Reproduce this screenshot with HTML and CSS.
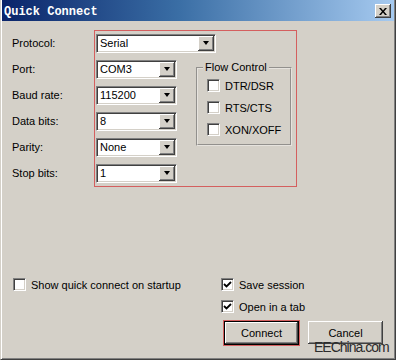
FILE: index.html
```html
<!DOCTYPE html>
<html lang="en">
<head>
  <meta charset="UTF-8" />
  <title>Quick Connect</title>
  <link rel="stylesheet" href="styles.css">
</head>
<body>
  <div class="window">
    <!-- Title bar -->
    <div class="titlebar">
      <span class="title">Quick Connect</span>
      <span class="close">
        <svg width="8" height="7" viewBox="0 0 8 7"><path d="M0 0h2l2 2.5 2-2.5h2l-3 3.5 3 3.5h-2l-2-2.5-2 2.5h-2l3-3.5z" fill="#000"/></svg>
      </span>
    </div>

    <div class="content">
      <div class="form">
        <div class="labels">
          <span>Protocol:</span>
          <span>Port:</span>
          <span>Baud rate:</span>
          <span>Data bits:</span>
          <span>Parity:</span>
          <span>Stop bits:</span>
        </div>

        <div class="highlight">
          <div class="combo wide"><span class="value">Serial</span><span class="arrow"></span></div>
          <div class="settings">
            <div class="combos">
              <div class="combo"><span class="value">COM3</span><span class="arrow"></span></div>
              <div class="combo"><span class="value">115200</span><span class="arrow"></span></div>
              <div class="combo"><span class="value">8</span><span class="arrow"></span></div>
              <div class="combo"><span class="value">None</span><span class="arrow"></span></div>
              <div class="combo"><span class="value">1</span><span class="arrow"></span></div>
            </div>
            <fieldset class="flow">
              <legend>Flow Control</legend>
              <div class="check"><span class="box"></span>DTR/DSR</div>
              <div class="check"><span class="box"></span>RTS/CTS</div>
              <div class="check"><span class="box"></span>XON/XOFF</div>
            </fieldset>
          </div>
        </div>
      </div>

      <div class="options">
        <div class="check startup"><span class="box"></span>Show quick connect on startup</div>
        <div class="right">
          <div class="check"><span class="box"><svg width="9" height="9" viewBox="0 0 9 9"><path d="M1 4l2.5 2.5 4.5-4.5" fill="none" stroke="#000" stroke-width="1.8"/></svg></span>Save session</div>
          <div class="check"><span class="box"><svg width="9" height="9" viewBox="0 0 9 9"><path d="M1 4l2.5 2.5 4.5-4.5" fill="none" stroke="#000" stroke-width="1.8"/></svg></span>Open in a tab</div>
          <div class="buttons">
            <button class="btn default">Connect</button>
            <button class="btn">Cancel</button>
          </div>
        </div>
      </div>
    </div>

    <span class="watermark">EEChina.com</span>
  </div>
</body>
</html>
```

FILE: styles.css
```css
/* Classic grey dialog */
body {
  margin: 0;
  background: #d4d0c8;
  font-family: 'Liberation Sans', Arial, sans-serif;
  font-size: 11px;
  color: #000;
}

.window {
  position: relative;
  width: 396px;
  height: 360px;
  box-sizing: border-box;
  background: #d4d0c8;
  border-left: 1px solid #d4d0c8;
  border-right: 1px solid #404040;
  border-bottom: 1px solid #404040;
  box-shadow: inset 1px 0 #fff, inset -1px -1px #808080;
  display: flex;
  flex-direction: column;
}

/* Title bar with the blue gradient */
.titlebar {
  height: 21px;
  margin: 0 1px;
  background: linear-gradient(to right, #0a246a, #3a6ea5 45%, #a6caf0);
  display: flex;
  align-items: center;
  justify-content: space-between;
  padding: 0 3px 0 2px;
}

.title {
  font-family: 'Liberation Mono', monospace;
  font-weight: bold;
  font-size: 12px;
  color: #fff;
  margin-top: 2px;
}

.close {
  width: 16px;
  height: 14px;
  box-sizing: border-box;
  background: #d4d0c8;
  box-shadow: inset -1px -1px #404040, inset 1px 1px #fff, inset -2px -2px #808080;
  display: flex;
  align-items: center;
  justify-content: center;
  margin-top: 1px;
}

.content {
  padding: 9px 0 0 11px;
}

.form {
  display: flex;
}

.labels {
  width: 82px;
  padding-top: 4px;
  display: flex;
  flex-direction: column;
  gap: 7px;
}

.labels span {
  height: 19px;
  line-height: 19px;
}

/* Red marker round the connection settings */
.highlight {
  width: 203px;
  height: 157px;
  box-sizing: border-box;
  border: 1px solid #d45f5f;
  padding: 3px 0 0 1px;
  display: flex;
  flex-direction: column;
  gap: 7px;
}

.settings {
  display: flex;
  align-items: flex-start;
}

.combos {
  display: flex;
  flex-direction: column;
  gap: 7px;
}

.combo {
  width: 81px;
  height: 19px;
  box-sizing: border-box;
  background: #fff;
  border: 1px solid;
  border-color: #808080 #fff #fff #808080;
  box-shadow: inset 1px 1px #404040, inset -1px -1px #d4d0c8;
  display: flex;
  align-items: center;
  padding: 1px;
}

.combo.wide {
  width: 120px;
}

.combo .value {
  flex: 1;
  padding-left: 2px;
  line-height: 15px;
}

.combo .arrow {
  width: 16px;
  height: 15px;
  box-sizing: border-box;
  background: #d4d0c8;
  box-shadow: inset -1px -1px #404040, inset 1px 1px #fff, inset -2px -2px #808080;
  display: flex;
  align-items: center;
  justify-content: center;
}

.combo .arrow::after {
  content: '';
  border-left: 3.5px solid transparent;
  border-right: 3.5px solid transparent;
  border-top: 4px solid #000;
  margin: 0 1px 1px 0;
}

/* Flow Control group box */
.flow {
  width: 96px;
  box-sizing: border-box;
  margin: 1px 0 0 19px;
  padding: 5px 0 8px 9px;
  border: 2px groove #e6e3de;
  display: flex;
  flex-direction: column;
  gap: 9px;
}

.flow legend {
  margin-left: -4px;
  padding: 0 2px;
  line-height: 13px;
}

.check {
  display: flex;
  align-items: center;
  gap: 5px;
  height: 13px;
}

.box {
  width: 13px;
  height: 13px;
  box-sizing: border-box;
  background: #fff;
  border: 1px solid;
  border-color: #808080 #fff #fff #808080;
  box-shadow: inset 1px 1px #404040, inset -1px -1px #d4d0c8;
  display: flex;
  align-items: center;
  justify-content: center;
  flex-shrink: 0;
}

/* Bottom options and buttons */
.options {
  display: flex;
  align-items: flex-start;
  margin-top: 91px;
}

.startup {
  width: 208px;
  margin-left: 1px;
}

.right {
  display: flex;
  flex-direction: column;
  gap: 9px;
}

.buttons {
  display: flex;
  gap: 9px;
  margin: -1px 0 0 3px;
}

.btn {
  width: 75px;
  height: 23px;
  font-family: inherit;
  font-size: 11px;
  background: #d4d0c8;
  border: none;
  padding: 0;
  box-shadow: inset -1px -1px #404040, inset 1px 1px #fff, inset -2px -2px #808080;
}

.btn.default {
  border: 1px solid #000;
  outline: 1px solid #d45f5f;
  height: 24px;
}

.watermark {
  position: absolute;
  left: 313px;
  top: 339px;
  font-size: 14px;
  letter-spacing: -1px;
  color: #2c2c2c;
}
```
